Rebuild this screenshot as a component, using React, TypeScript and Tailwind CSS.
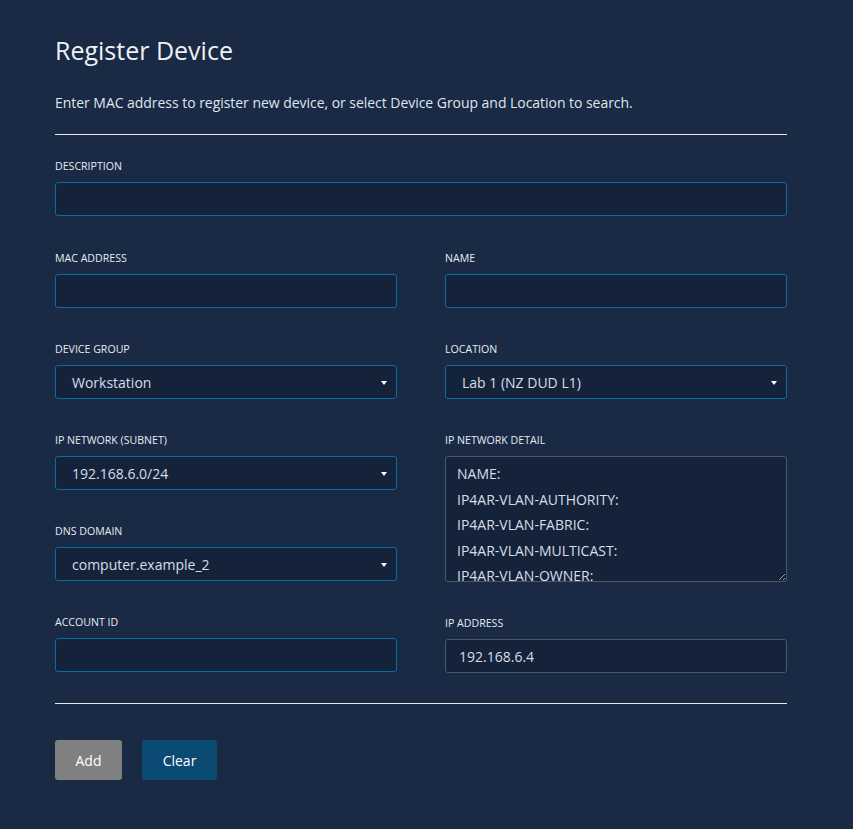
const font = { fontFamily: '"Open Sans", "Liberation Sans", sans-serif' }

const Label = ({ children }: { children: React.ReactNode }) => (
  <label className="block h-4 mb-2 text-[10.6px] leading-4 uppercase text-[#e4ebf2]">{children}</label>
)

const TextInput = ({ value = '', muted = false }: { value?: string; muted?: boolean }) => (
  <input
    readOnly
    value={value}
    className={`block w-full h-[34px] px-[13px] rounded-[3px] bg-[#15233a] text-[14px] text-[#d6dee8] outline-none border ${
      muted ? 'border-[#4b5668]' : 'border-[#0b6aa8]'
    }`}
  />
)

const Select = ({ value }: { value: string }) => (
  <div className="relative h-[34px] rounded-[3px] bg-[#15233a] border border-[#0b6aa8] flex items-center pl-4 text-[14px] text-[#d6dee8]">
    {value}
    <span className="absolute right-[9px] top-[15px] w-0 h-0 border-l-[3px] border-r-[3px] border-t-[4px] border-l-transparent border-r-transparent border-t-white" />
  </div>
)

const Field = ({ label, children }: { label: string; children: React.ReactNode }) => (
  <div className="mb-[33px]">
    <Label>{label}</Label>
    {children}
  </div>
)

const detail = [
  'NAME:',
  'IP4AR-VLAN-AUTHORITY:',
  'IP4AR-VLAN-FABRIC:',
  'IP4AR-VLAN-MULTICAST:',
  'IP4AR-VLAN-OWNER:',
  'IP4AR-VLAN-PURPOSE:',
].join('\n')

export default function App() {
  return (
    <div className="min-h-[829px] bg-[#1a2944] text-[#e8eef5]" style={font}>
      <div className="w-[732px] ml-[55px] pt-[33px] pb-[49px]">
        <h1 className="text-[25px] leading-[34px] text-[#eef2f7]">Register Device</h1>
        <p className="mt-[26px] text-[14px] leading-5 text-[#dfe6ee] tracking-[-0.04px]">
          Enter MAC address to register new device, or select Device Group and Location to search.
        </p>
        <hr className="mt-[21px] border-0 h-px bg-[#e6e9ee]" />

        <div className="mt-[23px] mb-[34px]">
          <Label>Description</Label>
          <TextInput />
        </div>

        <div className="grid grid-cols-2 gap-x-12">
          <div>
            <Field label="MAC Address">
              <TextInput />
            </Field>
            <Field label="Device Group">
              <Select value="Workstation" />
            </Field>
            <Field label="IP Network (Subnet)">
              <Select value="192.168.6.0/24" />
            </Field>
            <Field label="DNS Domain">
              <Select value="computer.example_2" />
            </Field>
            <div>
              <Label>Account ID</Label>
              <TextInput />
            </div>
          </div>
          <div>
            <Field label="Name">
              <TextInput />
            </Field>
            <Field label="Location">
              <Select value="Lab 1 (NZ DUD L1)" />
            </Field>
            <Field label="IP Network Detail">
              <textarea
                readOnly
                value={detail}
                className="block w-full h-[126px] pl-[11px] pt-[4px] rounded-[3px] bg-[#15233a] border border-[#4b5668] text-[14px] leading-[25.5px] text-[#d6dee8] outline-none overflow-hidden"
              />
            </Field>
            <div>
              <Label>IP Address</Label>
              <TextInput value="192.168.6.4" muted />
            </div>
          </div>
        </div>

        <hr className="mt-[30px] border-0 h-px bg-[#e6e9ee]" />

        <div className="mt-9 flex gap-5">
          <button className="h-10 w-[67px] rounded-[3px] bg-[#808080] text-[14px] text-white">Add</button>
          <button className="h-10 w-[75px] rounded-[3px] bg-[#0b4a73] text-[14px] text-white">Clear</button>
        </div>
      </div>
    </div>
  )
}
